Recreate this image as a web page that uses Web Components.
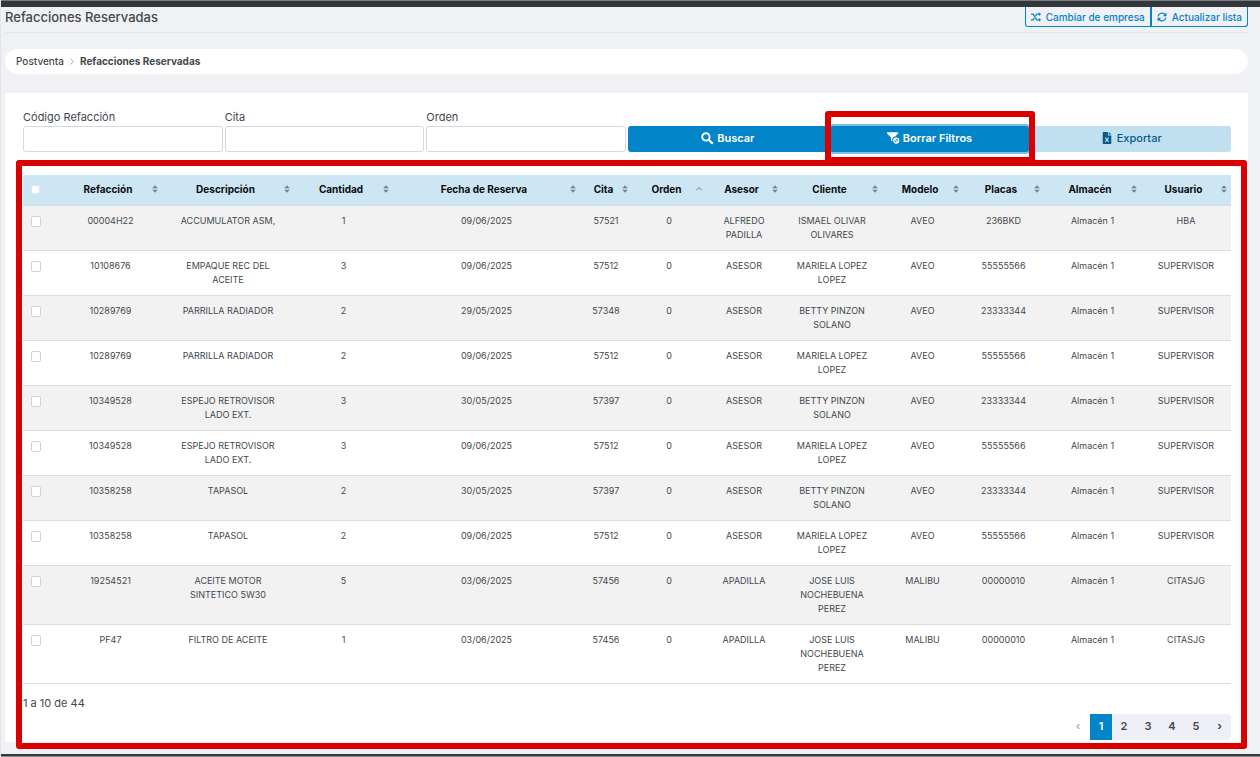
<!DOCTYPE html>
<html lang="es">
<head>
<meta charset="utf-8">
<meta name="viewport" content="width=device-width, initial-scale=1">
<title>Refacciones Reservadas</title>
<style>
  :root {
    --accent: #0284c8;
    --ink: #43484d;
    --page: #f0f1f5;
    --line: #dcdcdf;
    --mark: #da0000;
  }
  * { box-sizing: border-box; }
  body {
    margin: 0;
    background: var(--page);
    color: var(--ink);
    font: 11px/16px Inter, "Noto Sans", sans-serif;
  }
</style>
</head>
<body>
<app-shell>
  <page-header slot="header" heading="Refacciones Reservadas"></page-header>
  <bread-crumbs slot="header"><a href="#postventa">Postventa</a><b slot="current">Refacciones Reservadas</b></bread-crumbs>
  <filter-bar></filter-bar>
  <marked-area class="list">
    <parts-table></parts-table>
    <list-footer></list-footer>
  </marked-area>
</app-shell>

<script>
const ICONS = {
  shuffle: '<path d="M0 3h3l5 8h4M0 11h3l1.600-2.500M6.400 5.500 8 3h4" fill="none" stroke="currentColor" stroke-width="1.700"/><path d="M11 .3 14.300 3 11 5.700zM11 8.300 14.300 11 11 13.700z" fill="currentColor"/>',
  refresh: '<path d="M1.600 6.200A5.500 5.500 0 0 1 11.200 3.500M12.400 7.800A5.500 5.500 0 0 1 2.800 10.500" fill="none" stroke="currentColor" stroke-width="1.700"/><path d="M13.200.8v5H8.300zM.8 13.200v-5h4.900z" fill="currentColor"/>',
  search: '<circle cx="5.700" cy="5.700" r="4.300" fill="none" stroke="currentColor" stroke-width="2.200"/><path d="m9 9 4 4" stroke="currentColor" stroke-width="2.600" stroke-linecap="round"/>',
  filter: '<path d="M.6.300h11.800c.8 0 1.100.900.600 1.400L9.600 5.200A4.300 4.300 0 0 0 6.300 11L4.700 9.800V6.300L.1 1.700C-.4 1.200-.1.300.6.300z" fill="currentColor"/><circle cx="10.800" cy="10" r="2.800" fill="none" stroke="currentColor" stroke-width="1.600"/><path d="m9 8.200 3.600 3.600" stroke="currentColor" stroke-width="1.300"/>',
  excel: '<path d="M2 1c0-.6.400-1 1-1h5v4h4v9c0 .6-.4 1-1 1H3c-.6 0-1-.4-1-1zM9 0l3 3H9z" fill="currentColor"/><path d="m5 6.500 4 5m0-5-4 5" stroke="#c0dff0" stroke-width="1.300"/>'
};

function define(name, css, html, setup) {
  const tpl = document.createElement('template');
  tpl.innerHTML = `<style>*{box-sizing:border-box}${css}</style>${html}`;
  customElements.define(name, class extends HTMLElement {
    constructor() {
      super();
      this.attachShadow({ mode: 'open' }).append(tpl.content.cloneNode(true));
    }
    connectedCallback() { if (setup) setup(this, this.shadowRoot); }
  });
}

define('ui-icon', `
  :host { display: inline-flex; flex: none; width: 11px; height: 11px; }
  svg { width: 100%; height: 100%; overflow: visible; }
`, '<svg viewBox="0 0 14 14" aria-hidden="true"></svg>', (el, root) => {
  root.querySelector('svg').innerHTML = ICONS[el.getAttribute('name')];
});

define('app-shell', `
  :host {
    display: flex; flex-direction: column; min-height: 100vh;
    border-left: 1px solid #e2e4e8;
  }
  .top { height: 7px; background: #32373c; border-top: 1px solid #777d80; }
  .bottom { height: 3px; background: #36383b; border-bottom: 1px solid #8b8c8e; }
  header { padding: 0 12px 0 4px; }
  main {
    flex: 1; margin: 19px 12px 12px 4px; padding: 16px 17px 2px 18px;
    background: #fff;
  }
`, '<div class="top"></div><header><slot name="header"></slot></header><main><slot></slot></main><div class="bottom"></div>');

define('page-header', `
  :host { display: block; border-bottom: 1px solid #e3e4ee; }
  .bar { display: flex; justify-content: space-between; align-items: flex-start; height: 25px; }
  h1 { margin: 0; font-size: 13px; line-height: 20px; font-weight: 500; }
  .actions { display: flex; }
  button {
    display: flex; align-items: center; gap: 5px; height: 20px; padding: 0 5px;
    font: 500 10px/16px Inter, sans-serif; color: var(--accent); background: none;
    border: 1px solid var(--accent); border-top: 0; border-radius: 0 0 0 3px;
  }
  button + button { border-radius: 0 0 3px 0; }
  ui-icon { width: 10px; height: 10px; }
`, `<div class="bar"><h1></h1><div class="actions">
  <button type="button"><ui-icon name="shuffle"></ui-icon>Cambiar de empresa</button>
  <button type="button"><ui-icon name="refresh"></ui-icon>Actualizar lista</button>
</div></div>`, (el, root) => {
  root.querySelector('h1').textContent = el.getAttribute('heading');
});

define('bread-crumbs', `
  :host { display: block; margin-top: 16px; background: #fff; border-radius: 13px; font-size: 10px; }
  nav { display: flex; align-items: center; gap: 6px; height: 25px; padding: 0 11px 1px; }
  svg { width: 4px; height: 7px; }
  ::slotted(a) { color: inherit; text-decoration: none; font-weight: 500; }
  ::slotted(b) { font-weight: 700; }
`, `<nav aria-label="Ruta"><slot></slot>
  <svg viewBox="0 0 4 7" aria-hidden="true"><path d="M.5.5 3.500 3.500.5 6.500" fill="none" stroke="#a9adb3"/></svg>
  <slot name="current"></slot></nav>`);

define('marked-area', `
  :host { display: block; position: relative; }
  :host::after {
    content: ""; position: absolute; pointer-events: none;
    border: 6px solid var(--mark); border-radius: 3px;
  }
  :host(.list) { margin-top: 23px; }
  :host(.list)::after { inset: -15px -16px -9px -7px; }
  :host(.action)::after { inset: -15px -6px -11px -5px; }
`, '<slot></slot>');

define('filter-bar', `
  :host { display: block; }
  form { display: grid; grid-template-columns: repeat(6, 1fr); gap: 2px; align-items: end; }
  label { display: block; line-height: 17px; }
  input {
    display: block; width: 100%; height: 26px; padding: 0 8px;
    border: 1px solid #d6d7e3; border-radius: 3px; background: #fff; font: inherit;
  }
  button {
    display: flex; justify-content: center; align-items: center; gap: 4px;
    width: 100%; height: 26px; padding: 0 6px 2px; border: 0; border-radius: 3px;
    font: 600 11px/16px Inter, sans-serif; color: #fff; background: var(--accent);
  }
  button.cleared { box-shadow: 0 0 0 2px #80c1e3; }
  button:disabled { color: #07598a; background: #c0dff0; font-weight: 500; }
  ui-icon { width: 12px; height: 12px; }
`, `<form>
  <div><label for="codigo">Código Refacción</label><input id="codigo" type="text"></div>
  <div><label for="cita">Cita</label><input id="cita" type="text"></div>
  <div><label for="orden">Orden</label><input id="orden" type="text"></div>
  <button type="button"><ui-icon name="search"></ui-icon>Buscar</button>
  <marked-area class="action"><button type="button" class="cleared"><ui-icon name="filter"></ui-icon>Borrar Filtros</button></marked-area>
  <button type="button" disabled><ui-icon name="excel"></ui-icon>Exportar</button>
</form>`);

const COLUMNS = [
  ['Refacción', 103], ['Descripción', 132], ['Cantidad', 99], ['Fecha de Reserva', 187],
  ['Cita', 52], ['Orden', 74], ['Asesor', 76], ['Cliente', 100], ['Modelo', 81],
  ['Placas', 81], ['Almacén', 97], ['Usuario', 90]
];
const MARIELA = 'MARIELA LOPEZ\nLOPEZ', BETTY = 'BETTY PINZON\nSOLANO', JOSE = 'JOSE LUIS\nNOCHEBUENA\nPEREZ';
const ROWS = [
  ['00004H22', 'ACCUMULATOR ASM,', 1, '09/06/2025', 57521, 0, 'ALFREDO\nPADILLA', 'ISMAEL OLIVAR\nOLIVARES', 'AVEO', '236BKD', 'Almacén 1', 'HBA'],
  ['10108676', 'EMPAQUE REC DEL\nACEITE', 3, '09/06/2025', 57512, 0, 'ASESOR', MARIELA, 'AVEO', '55555566', 'Almacén 1', 'SUPERVISOR'],
  ['10289769', 'PARRILLA RADIADOR', 2, '29/05/2025', 57348, 0, 'ASESOR', BETTY, 'AVEO', '23333344', 'Almacén 1', 'SUPERVISOR'],
  ['10289769', 'PARRILLA RADIADOR', 2, '09/06/2025', 57512, 0, 'ASESOR', MARIELA, 'AVEO', '55555566', 'Almacén 1', 'SUPERVISOR'],
  ['10349528', 'ESPEJO RETROVISOR\nLADO EXT.', 3, '30/05/2025', 57397, 0, 'ASESOR', BETTY, 'AVEO', '23333344', 'Almacén 1', 'SUPERVISOR'],
  ['10349528', 'ESPEJO RETROVISOR\nLADO EXT.', 3, '09/06/2025', 57512, 0, 'ASESOR', MARIELA, 'AVEO', '55555566', 'Almacén 1', 'SUPERVISOR'],
  ['10358258', 'TAPASOL', 2, '30/05/2025', 57397, 0, 'ASESOR', BETTY, 'AVEO', '23333344', 'Almacén 1', 'SUPERVISOR'],
  ['10358258', 'TAPASOL', 2, '09/06/2025', 57512, 0, 'ASESOR', MARIELA, 'AVEO', '55555566', 'Almacén 1', 'SUPERVISOR'],
  ['19254521', 'ACEITE MOTOR\nSINTETICO 5W30', 5, '03/06/2025', 57456, 0, 'APADILLA', JOSE, 'MALIBU', '00000010', 'Almacén 1', 'CITASJG'],
  ['PF47', 'FILTRO DE ACEITE', 1, '03/06/2025', 57456, 0, 'APADILLA', JOSE, 'MALIBU', '00000010', 'Almacén 1', 'CITASJG']
];
const SORT = '<svg viewBox="0 0 6 8" aria-hidden="true"><path d="M3 .2 5.800 3.300H.2zM3 7.800.2 4.700h5.600z" fill="#71838f"/></svg>';
const SORT_UP = '<svg viewBox="0 0 6 8" aria-hidden="true"><path d="M.3 5.300 3 2.500 5.700 5.300" fill="none" stroke="#71838f"/></svg>';

define('parts-table', `
  :host { display: block; }
  table { width: 100%; table-layout: fixed; border-collapse: separate; border-spacing: 0; }
  th { height: 31px; padding: 0 0 2px; background: #cce6f3; border-bottom: 1px solid #d5dde2; vertical-align: middle; }
  th button {
    display: flex; align-items: center; width: 100%; padding: 0 4px 0 5px;
    border: 0; background: none; color: #0a0c0e; font: 700 10px/14px Inter, sans-serif;
  }
  th span { flex: 1; white-space: nowrap; }
  th svg { flex: none; width: 6px; height: 8px; }
  td {
    padding: 8px 4px; border-bottom: 1px solid var(--line); vertical-align: top;
    font-size: 9px; line-height: 14px; text-align: center; white-space: pre;
  }
  tbody tr:nth-child(odd) td { background: #f2f2f2; }
  input {
    appearance: none; display: block; width: 10px; height: 11px; margin: 2px 0 0 4px;
    border: 1px solid #cdd3e0; border-radius: 2px; background: #fff;
  }
  th input { width: 9px; height: 9px; margin: 0 0 0 8px; border-color: #e2e8f0; }
`, `<table>
  <colgroup><col style="width:36px">${COLUMNS.map(c => `<col style="width:${c[1]}px">`).join('')}</colgroup>
  <thead><tr><th><input type="checkbox" aria-label="Seleccionar todo"></th>${COLUMNS.map(c =>
    `<th scope="col"><button type="button"><span>${c[0]}</span>${c[0] === 'Orden' ? SORT_UP : SORT}</button></th>`).join('')}</tr></thead>
  <tbody>${ROWS.map(r => `<tr><td><input type="checkbox" aria-label="Seleccionar ${r[0]}"></td>${r.map(v => `<td>${v}</td>`).join('')}</tr>`).join('')}</tbody>
</table>`);

define('list-footer', `
  :host { display: block; padding-top: 11px; }
  p { margin: 0; line-height: 16px; }
  nav { display: flex; justify-content: flex-end; margin-top: 3px; }
  button {
    width: 24px; height: 26px; padding: 0 0 2px; border: 0; background: #eff0f5;
    color: var(--ink); font: 600 11px/16px Inter, sans-serif;
  }
  .current { width: 22px; background: var(--accent); color: #fff; }
  .prev { background: none; color: #b5b8c4; font-weight: 700; }
  .next { width: 23px; border-radius: 0 4px 4px 0; font-weight: 700; }
`, `<p>1 a 10 de 44</p><nav aria-label="Paginación">
  <button type="button" class="prev" disabled aria-label="Anterior">‹</button>
  <button type="button" class="current" aria-current="page">1</button>
  <button type="button">2</button><button type="button">3</button><button type="button">4</button><button type="button">5</button>
  <button type="button" class="next" aria-label="Siguiente">›</button>
</nav>`);
</script>
</body>
</html>
